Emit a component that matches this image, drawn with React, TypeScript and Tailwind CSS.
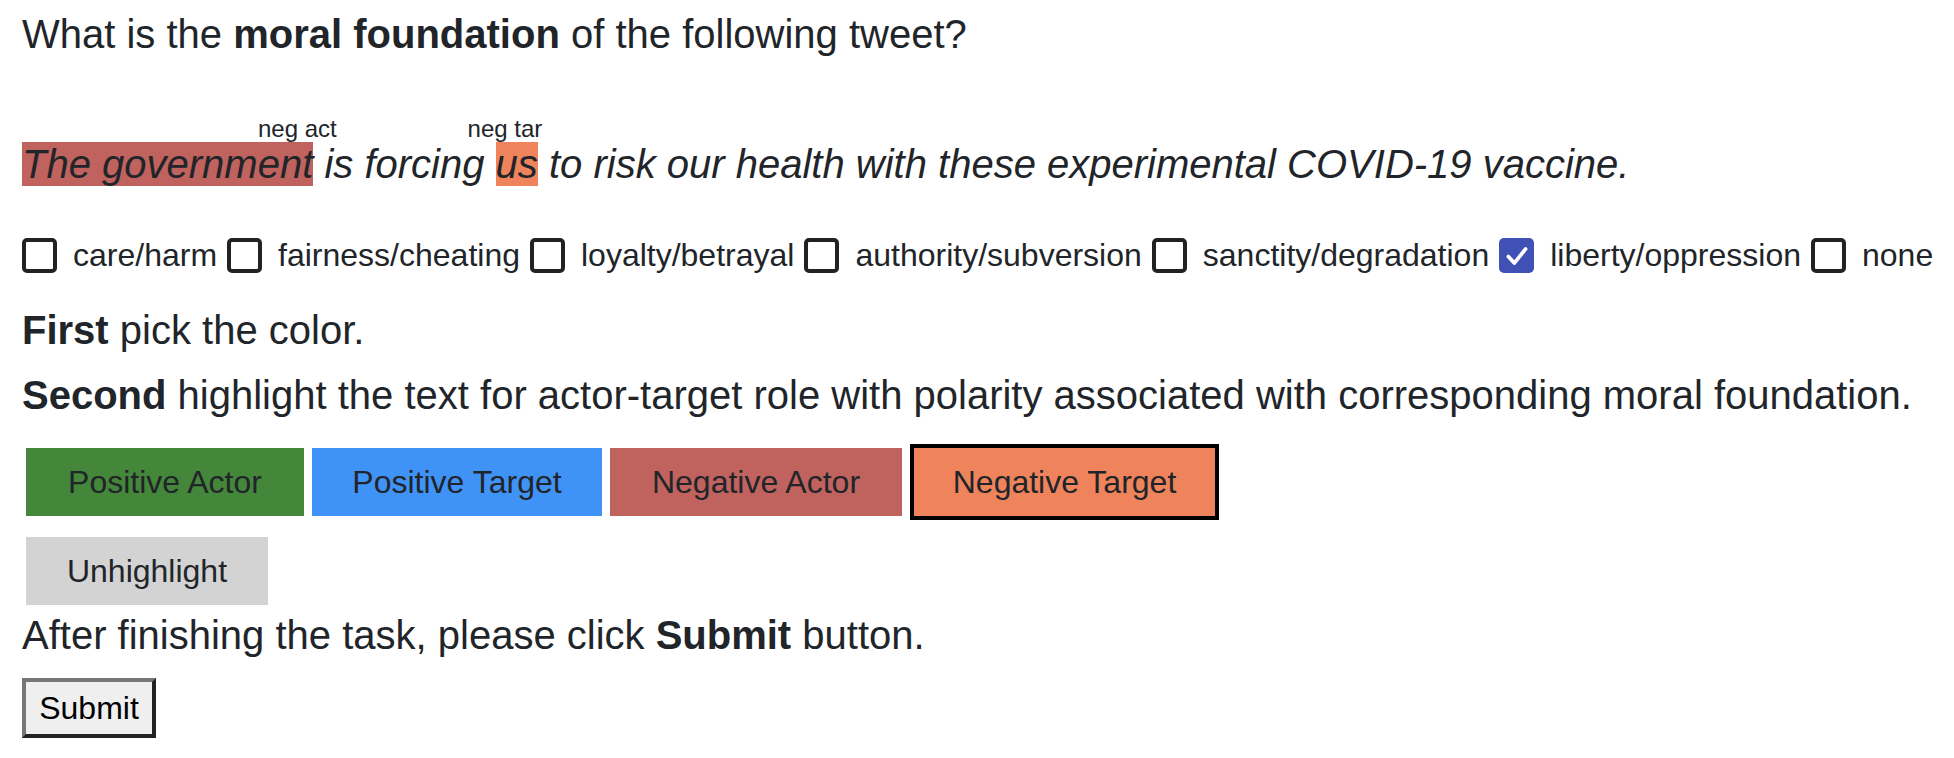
import React from 'react';

const foundations = [
  { label: 'care/harm', checked: false },
  { label: 'fairness/cheating', checked: false },
  { label: 'loyalty/betrayal', checked: false },
  { label: 'authority/subversion', checked: false },
  { label: 'sanctity/degradation', checked: false },
  { label: 'liberty/oppression', checked: true },
  { label: 'none', checked: false },
];

const Checkbox: React.FC<{ checked: boolean }> = ({ checked }) =>
  checked ? (
    <span className="w-[35px] h-[35px] rounded-[5px] bg-[#4051b5] flex items-center justify-center shrink-0">
      <svg width="26" height="26" viewBox="0 0 24 24" fill="none">
        <polyline points="4,12.5 9.5,18.5 20,5.5" stroke="#fff" strokeWidth="3.4" strokeLinecap="round" strokeLinejoin="round" />
      </svg>
    </span>
  ) : (
    <span className="w-[35px] h-[35px] rounded-[5px] border-4 border-[#222] bg-white shrink-0" />
  );

const App: React.FC = () => {
  return (
    <div
      className="w-[1954px] h-[758px] bg-white text-[#212529] pl-[22px] pt-[11px] overflow-hidden"
      style={{ fontFamily: '"Liberation Sans", Arial, Helvetica, sans-serif' }}
    >
      <div className="text-[40px] leading-[46px]">
        What is the <b>moral foundation</b> of the following tweet?
      </div>

      {/* tweet with highlights */}
      <div className="mt-[84px] text-[40px] leading-[46px] italic whitespace-nowrap">
        <span className="relative bg-[#c0625e]">
          The government
          <span className="absolute left-[236px] top-[-27px] text-[24px] leading-[28px] not-italic whitespace-nowrap">neg act</span>
        </span>{' '}
        is forcing{' '}
        <span className="relative bg-[#ef835c]">
          us
          <span className="absolute left-[-28px] top-[-27px] text-[24px] leading-[28px] not-italic whitespace-nowrap">neg tar</span>
        </span>{' '}
        to risk our health with these experimental COVID-19 vaccine.
      </div>

      <div className="mt-[50px] h-[37px] flex items-center text-[32px] leading-[37px] whitespace-nowrap">
        {foundations.map((f) => (
          <div key={f.label} className="flex items-center">
            <Checkbox checked={f.checked} />
            <span className="ml-[16px] mr-[10px]">{f.label}</span>
          </div>
        ))}
      </div>

      <div className="mt-[33px] text-[40px] leading-[46px]">
        <b>First</b> pick the color.
      </div>
      <div className="mt-[19px] text-[40px] leading-[46px] whitespace-nowrap">
        <b>Second</b> highlight the text for actor-target role with polarity associated with corresponding moral foundation.
      </div>

      <div className="mt-[26px] ml-1 flex items-center gap-2 text-[32px] leading-[36px]">
        <button className="w-[278px] py-4 bg-[#44873a]">Positive Actor</button>
        <button className="w-[290px] py-4 bg-[#3f92f6]">Positive Target</button>
        <button className="w-[292px] py-4 bg-[#c0625e]">Negative Actor</button>
        <button className="w-[309px] py-4 bg-[#ef835c] border-4 border-black">Negative Target</button>
      </div>

      <div className="mt-[17px] ml-1 text-[32px] leading-[36px]">
        <button className="w-[242px] py-4 bg-[#d3d3d3]">Unhighlight</button>
      </div>

      <div className="mt-[7px] text-[40px] leading-[46px]">
        After finishing the task, please click <b>Submit</b> button.
      </div>

      <div className="mt-[20px]">
        <button className="w-[134px] h-[60px] flex items-center justify-center bg-[#efefef] text-black text-[32px] leading-[36px] border-4 border-t-[#767676] border-l-[#767676] border-r-[#222] border-b-[#222]">
          Submit
        </button>
      </div>
    </div>
  );
};

export default App;
